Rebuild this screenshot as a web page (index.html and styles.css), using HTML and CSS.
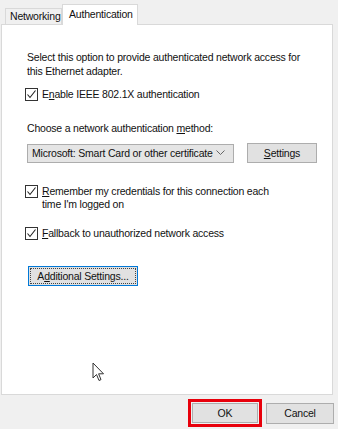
FILE: index.html
```html
<!DOCTYPE html>
<html>
<head>
<meta charset="utf-8">
<link rel="stylesheet" href="styles.css">
</head>
<body>
<div class="dialog">
  <div class="tabs">
    <div class="tab">Networking</div>
    <div class="tab active">Authentication</div>
  </div>
  <div class="panel">
    <p class="intro">Select this option to provide authenticated network access for this Ethernet adapter.</p>
    <label class="check first"><span class="box"><svg width="11" height="11" viewBox="0 0 11 11"><path d="M1.5 5.5 L4 8.5 L9.5 1.5" fill="none" stroke="#222" stroke-width="1.1"/></svg></span><span>E<u>n</u>able IEEE 802.1X authentication</span></label>
    <p class="choose">Choose a network authentication <u>m</u>ethod:</p>
    <div class="method-row">
      <div class="select"><span>Microsoft: Smart Card or other certificate</span><svg width="9" height="6" viewBox="0 0 9 6"><path d="M0.5 0.5 L4.5 4.5 L8.5 0.5" fill="none" stroke="#666" stroke-width="1"/></svg></div>
      <div class="btn settings"><span><u>S</u>ettings</span></div>
    </div>
    <label class="check remember"><span class="box"><svg width="11" height="11" viewBox="0 0 11 11"><path d="M1.5 5.5 L4 8.5 L9.5 1.5" fill="none" stroke="#222" stroke-width="1.1"/></svg></span><span><u>R</u>emember my credentials for this connection each time I'm logged on</span></label>
    <label class="check fallback"><span class="box"><svg width="11" height="11" viewBox="0 0 11 11"><path d="M1.5 5.5 L4 8.5 L9.5 1.5" fill="none" stroke="#222" stroke-width="1.1"/></svg></span><span><u>F</u>allback to unauthorized network access</span></label>
    <div class="btn additional"><span class="focus">A<u>d</u>ditional Settings...</span></div>
    <svg class="cursor" width="14" height="21" viewBox="0 0 14 21"><path d="M1 1 L1 16 L4.5 12.5 L7 18.5 L9 17.6 L6.6 11.8 L11.5 11.8 Z" fill="#fff" stroke="#333" stroke-width="1" stroke-linejoin="round"/></svg>
  </div>
  <div class="footer">
    <div class="ok-mark"><div class="btn ok">OK</div></div>
    <div class="btn cancel">Cancel</div>
  </div>
</div>
</body>
</html>
```

FILE: styles.css
```css
* { box-sizing: border-box; }
html, body { margin: 0; padding: 0; }
body {
  background: #f0f0f0;
  font-family: "Liberation Sans", Arial, sans-serif;
  font-size: 10.5px;
  letter-spacing: -0.2px;
  color: #111;
  width: 338px;
  height: 429px;
  overflow: hidden;
}
.dialog { padding-top: 4px; }
.tabs {
  display: flex;
  align-items: flex-end;
  padding-left: 5px;
  height: 20px;
}
.tab {
  height: 16px;
  padding: 1px 0 0 4px;
  line-height: 13px;
  border: 1px solid #d9d9d9;
  border-bottom: none;
  background: #f0f0f0;
  width: 57px;
  white-space: nowrap;
}
.tab.active {
  height: 21px;
  width: 76px;
  background: #fff;
  padding: 3px 0 0 6px;
  margin-bottom: -1px;
  position: relative;
  z-index: 1;
}
.panel {
  position: relative;
  margin: 0 5px 0 1px;
  height: 371px;
  background: #fff;
  border: 1px solid #d9d9d9;
  padding: 0 0 0 25px;
}
u { text-decoration: underline; text-underline-offset: 1px; }
.intro {
  margin: 25px 0 0;
  width: 290px;
  line-height: 14px;
}
.check {
  display: flex;
  align-items: flex-start;
  gap: 4px;
  line-height: 13px;
}
.check.first { margin-top: 10px; margin-left: -2px; }
.box {
  flex: none;
  width: 13px;
  height: 13px;
  border: 1px solid #333;
  background: #fff;
  display: flex;
  align-items: center;
  justify-content: center;
}
.choose { margin: 20px 0 0; line-height: 14px; }
.method-row {
  display: flex;
  align-items: center;
  gap: 13px;
  margin-top: 8px;
}
.select {
  width: 207px;
  height: 19px;
  background: #e5e5e5;
  border: 1px solid #adadad;
  display: flex;
  align-items: center;
  justify-content: space-between;
  padding: 0 8px 0 4px;
  white-space: nowrap;
}
.btn {
  background: #e1e1e1;
  border: 1px solid #adadad;
  display: flex;
  align-items: center;
  justify-content: center;
}
.settings { width: 70px; height: 20px; }
.check.remember {
  margin-top: 22px;
  margin-left: -2px;
  width: 250px;
  line-height: 13px;
}
.check.fallback { margin-top: 16px; margin-left: -2px; }
.additional {
  margin-top: 26px;
  margin-left: 1px;
  width: 110px;
  height: 20px;
  border: 1px solid #0078d7;
  padding: 1px;
}
.additional .focus {
  display: flex;
  align-items: center;
  justify-content: center;
  width: 100%;
  height: 100%;
  outline: 1px dotted #444;
  outline-offset: -1px;
}
.cursor { position: absolute; left: 90px; top: 337px; }
.footer {
  display: flex;
  justify-content: flex-end;
  align-items: center;
  gap: 4px;
  padding: 4px 4px 0 0;
}
.ok-mark {
  border: 3px solid #e8000b;
  padding: 1px;
}
.ok { width: 66px; height: 20px; }
.cancel { width: 68px; height: 21px; }
```
